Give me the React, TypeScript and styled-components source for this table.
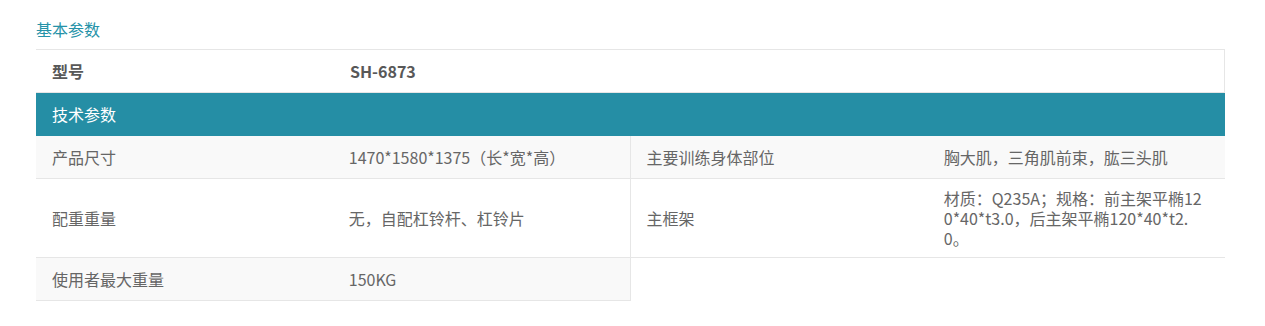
import styled, { createGlobalStyle } from 'styled-components';

const specs = [
  { label: '产品尺寸', value: '1470*1580*1375（长*宽*高）' },
  { label: '主要训练身体部位', value: '胸大肌，三角肌前束，肱三头肌' },
  { label: '配重重量', value: '无，自配杠铃杆、杠铃片' },
  { label: '主框架', value: '材质：Q235A；规格：前主架平椭120*40*t3.0，后主架平椭120*40*t2.0。' },
  { label: '使用者最大重量', value: '150KG' },
];

const GlobalStyle = createGlobalStyle`
  body {
    margin: 0;
    background: #fff;
    font-family: 'Noto Sans CJK SC', 'Noto Sans', sans-serif;
  }
`;

const App = () => {
  return (
    <Page>
      <GlobalStyle />
      <Title>基本参数</Title>
      <ModelRow>
        <Cell>
          <ModelText>型号</ModelText>
        </Cell>
        <Cell>
          <ModelText>SH-6873</ModelText>
        </Cell>
      </ModelRow>
      <SectionBar>技术参数</SectionBar>
      <SpecGrid>
        {specs.map((item, i) => (
          <SpecItem key={item.label} $striped={Math.floor(i / 2) % 2 === 0} $left={i % 2 === 0}>
            <Cell>{item.label}</Cell>
            <ValueCell>{item.value}</ValueCell>
          </SpecItem>
        ))}
      </SpecGrid>
    </Page>
  );
};

const Page = styled.div`
  padding: 17px 40px 0 36px;
  color: #666;
  font-size: 16px;
`;

const Title = styled.div`
  color: #2592a8;
  font-size: 16px;
  line-height: 24px;
  margin-bottom: 8px;
`;

const ModelRow = styled.div`
  display: grid;
  grid-template-columns: 298px 1fr;
  border-top: 1px solid #e6e6e6;
  border-right: 1px solid #e6e6e6;
  border-bottom: 1px solid #e6e6e6;
  background: #fff;
`;

const Cell = styled.div`
  display: flex;
  align-items: center;
  min-height: 42px;
  box-sizing: border-box;
  padding: 9px 16px;
  line-height: 20px;
`;

const ValueCell = styled(Cell)`
  word-break: break-all;
`;

const ModelText = styled.span`
  font-weight: bold;
  color: #585858;
`;

const SectionBar = styled.div`
  background: #258ea5;
  color: #fff;
  height: 43px;
  line-height: 43px;
  padding-left: 16px;
`;

const SpecGrid = styled.div`
  display: grid;
  grid-template-columns: 1fr 1fr;
`;

const SpecItem = styled.div<{ $striped: boolean; $left: boolean }>`
  display: grid;
  grid-template-columns: 1fr 1fr;
  background: ${({ $striped }) => ($striped ? '#f9f9f9' : '#fff')};
  border-bottom: 1px solid #e6e6e6;
  border-right: ${({ $left }) => ($left ? '1px solid #e6e6e6' : 'none')};
`;

export default App;
